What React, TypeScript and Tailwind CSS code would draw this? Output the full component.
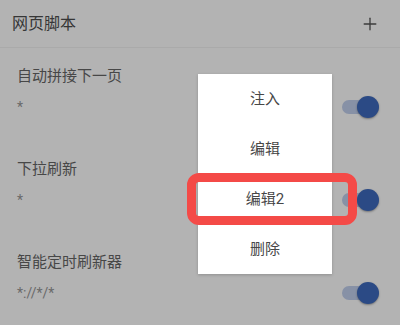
import { Plus } from 'lucide-react'

type Script = {
  name: string
  match: string
}

const scripts: Script[] = [
  { name: '自动拼接下一页', match: '*' },
  { name: '下拉刷新', match: '*' },
  { name: '智能定时刷新器', match: '*://*/*' },
]

const menuItems = ['注入', '编辑', '编辑2', '删除']

function Toggle() {
  return (
    <div className="relative w-[37px] h-[22px] shrink-0">
      <div className="absolute left-0 top-[4px] w-[28px] h-[14px] rounded-full bg-[#8791a6]" />
      <div className="absolute right-0 top-0 w-[22px] h-[22px] rounded-full bg-[#2b4a85] shadow-[0_1px_2px_rgba(0,0,0,0.35)]" />
    </div>
  )
}

export default function App() {
  return (
    <div
      className="relative w-[400px] h-[325px] overflow-hidden bg-[#b3b3b3]"
      style={{ fontFamily: 'Roboto, "Noto Sans CJK SC", sans-serif' }}
    >
      {/* Toolbar */}
      <div className="h-[48px] flex items-center justify-between pl-[12px] pr-[20px] border-b border-[#aaaaaa]">
        <span className="text-[16px] text-[#363636]">网页脚本</span>
        <Plus className="w-[20px] h-[20px] text-[#3d3d3d]" strokeWidth={1.6} />
      </div>

      {/* Script list */}
      <div className="flex flex-col">
        {scripts.map((s) => (
          <div key={s.name} className="h-[93px] pl-[17px] pr-[21px] pt-[18px] flex flex-col gap-[11px]">
            <div className="h-[20px] flex items-center text-[15px] text-[#474747]">{s.name}</div>
            <div className="h-[20px] flex items-center justify-between">
              <span className="text-[14px] text-[#6a6a6a]">{s.match}</span>
              <Toggle />
            </div>
          </div>
        ))}
      </div>

      {/* Popup menu */}
      <div className="absolute left-[198px] top-[74px] w-[134px] bg-white shadow-[0_1px_3px_rgba(0,0,0,0.2)] flex flex-col">
        {menuItems.map((item) => (
          <div key={item} className="h-[50px] flex items-center justify-center text-[15px] text-[#474747]">
            {item}
          </div>
        ))}
      </div>

      {/* Highlight */}
      <div className="absolute left-[187px] top-[173px] w-[170px] h-[52px] border-[9px] border-[#f44a47] rounded-[12px]" />
    </div>
  )
}
